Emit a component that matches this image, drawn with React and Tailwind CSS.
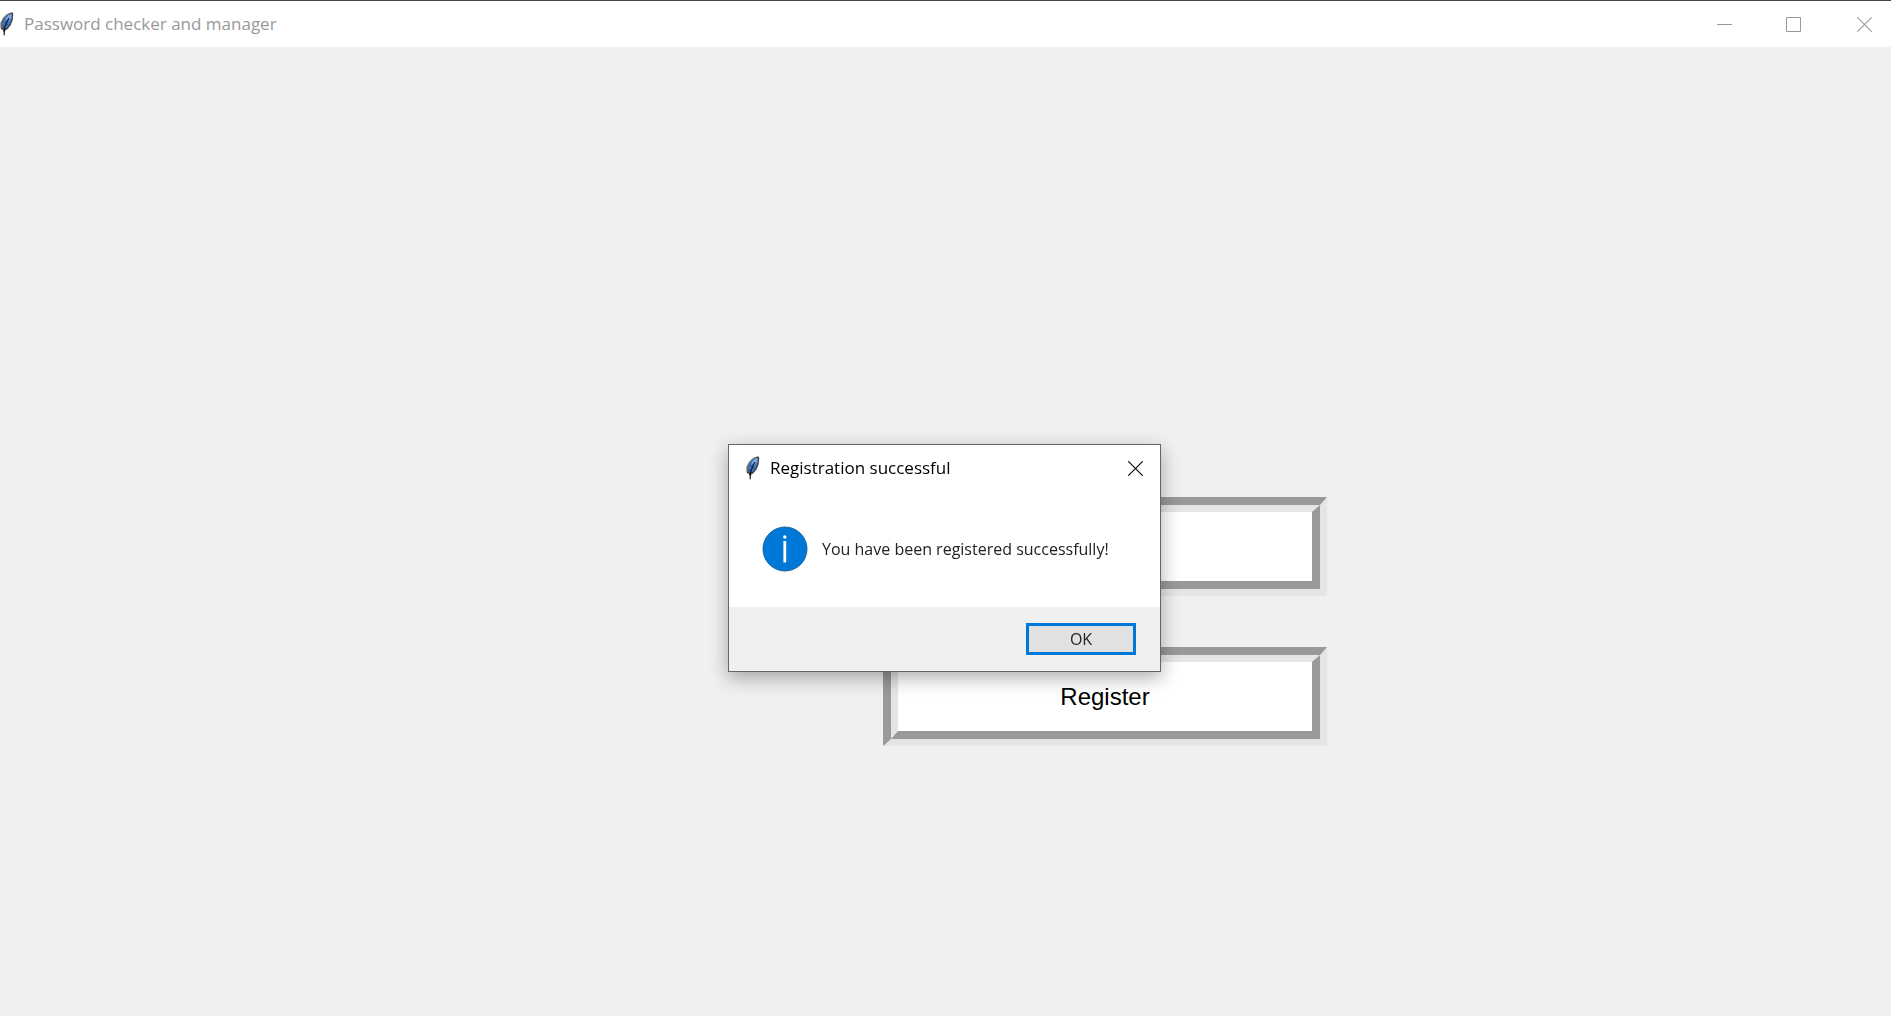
function Feather() {
  return (
    <svg viewBox="0 0 14 24" aria-hidden="true" className="h-6 w-3.5 shrink-0">
      <path d="M3.5 20 L3 18 L0.8 17 L0.5 11 L3 6 L7 2 L12 0.3 L13.3 1.5 L12.7 8 L10.8 13 L7.7 17 L5.3 18.5 L5 20 Z" fill="#444" />
      <path d="M2.2 15.5 L2.3 11 L4.5 6.5 L8 3 L11.8 1.8 L11.6 7 L9.5 12 L6.5 16 Z" fill="#3f7fd0" />
      <path d="M5.5 7 L8 3.5 L11.5 2 L11.2 6 L8.5 9 Z" fill="#7fabe3" />
      <path d="M1 16 L1.3 10.5 L3.5 6.5 L7 2.8 L10 1.4" fill="none" stroke="#8f8f88" strokeWidth="0.9" />
      <path d="M4.2 23.3 L4.4 17 L6.3 11 L9 6" fill="none" stroke="#10151d" strokeWidth="1.2" />
      <path d="M2.3 13.5 L4.8 14.5 M6.2 12.5 L8.2 12 M4 9.5 L5.5 11" stroke="#1b2c48" strokeWidth="1" />
    </svg>
  );
}

function CloseIcon() {
  return (
    <svg viewBox="0 0 15 15" aria-hidden="true" className="size-[15px]">
      <path d="M0.3 0.3 L14.7 14.7 M14.7 0.3 L0.3 14.7" stroke="currentColor" strokeWidth="1.1" />
    </svg>
  );
}

function GrooveButton({ label, children }) {
  return (
    <button
      type="button"
      aria-label={label}
      className="w-full border-t-8 border-r-7 border-b-7 border-l-8 border-t-[#999] border-l-[#999] border-r-[#e5e5e5] border-b-[#e5e5e5] font-['Liberation_Sans',sans-serif] text-2xl text-black"
    >
      <span className="flex h-[84px] items-center justify-center border-t-7 border-r-8 border-b-8 border-l-7 border-t-[#e5e5e5] border-l-[#e5e5e5] border-r-[#999] border-b-[#999] bg-white">
        {children}
      </span>
    </button>
  );
}

export default function App() {
  return (
    <div className="flex min-h-screen flex-col bg-[#f0f0f0] font-['Open_Sans',sans-serif]">
      <header className="flex h-[47px] items-center border-t border-[#444] bg-white text-[#999]">
        <Feather />
        <h1 className="ml-2.5 flex-1 text-[17px]">Password checker and manager</h1>
        <div className="flex self-stretch">
          <button type="button" aria-label="Minimize" className="flex w-[69px] items-center justify-center">
            <svg viewBox="0 0 15 15" aria-hidden="true" className="size-[15px]">
              <path d="M0 7.5 H15" stroke="currentColor" />
            </svg>
          </button>
          <button type="button" aria-label="Maximize" className="flex w-[69px] items-center justify-center">
            <svg viewBox="0 0 15 15" aria-hidden="true" className="size-[15px]">
              <path d="M0.5 0.5 H14.5 V14.5 H0.5 Z" fill="none" stroke="currentColor" />
            </svg>
          </button>
          <button type="button" aria-label="Close" className="flex w-[63px] items-center justify-end pr-[19px]">
            <CloseIcon />
          </button>
        </div>
      </header>

      <main className="flex flex-1 flex-col items-center justify-center pt-[180px] pl-[319px]">
        <div className="flex w-full max-w-[444px] flex-col gap-[51px]">
          <GrooveButton label="Login" />
          <GrooveButton>Register</GrooveButton>
        </div>
      </main>

      <div className="fixed inset-0 flex items-center justify-center pt-[100px] pr-[2px]">
        <section
          role="dialog"
          aria-labelledby="dialog-title"
          aria-describedby="dialog-message"
          className="w-full max-w-[433px] border border-[#666] bg-white shadow-[0_6px_18px_rgba(0,0,0,0.32)]"
        >
          <header className="flex h-[46px] items-center pr-[17px] pl-[17px] text-black">
            <Feather />
            <h2 id="dialog-title" className="ml-2.5 flex-1 text-[17px]">Registration successful</h2>
            <button type="button" aria-label="Close dialog">
              <CloseIcon />
            </button>
          </header>
          <div className="flex h-[116px] items-center gap-[14px] pl-[33px]">
            <svg viewBox="0 0 46 46" aria-hidden="true" className="size-[46px] shrink-0">
              <circle cx="23" cy="23" r="22" fill="#0078d7" stroke="#1a659f" strokeWidth="1" />
              <rect x="21.4" y="15" width="2.8" height="21.5" fill="#fff" />
              <circle cx="22.8" cy="11" r="1.7" fill="#fff" />
            </svg>
            <p id="dialog-message" className="text-base font-medium text-[#222]">You have been registered successfully!</p>
          </div>
          <footer className="flex h-16 items-center justify-end bg-[#f0f0f0] pr-6">
            <button type="button" className="flex h-8 w-[110px] items-center justify-center border-3 border-[#0078d7] bg-[#e1e1e1] text-base font-medium text-[#222]">
              OK
            </button>
          </footer>
        </section>
      </div>
    </div>
  );
}
